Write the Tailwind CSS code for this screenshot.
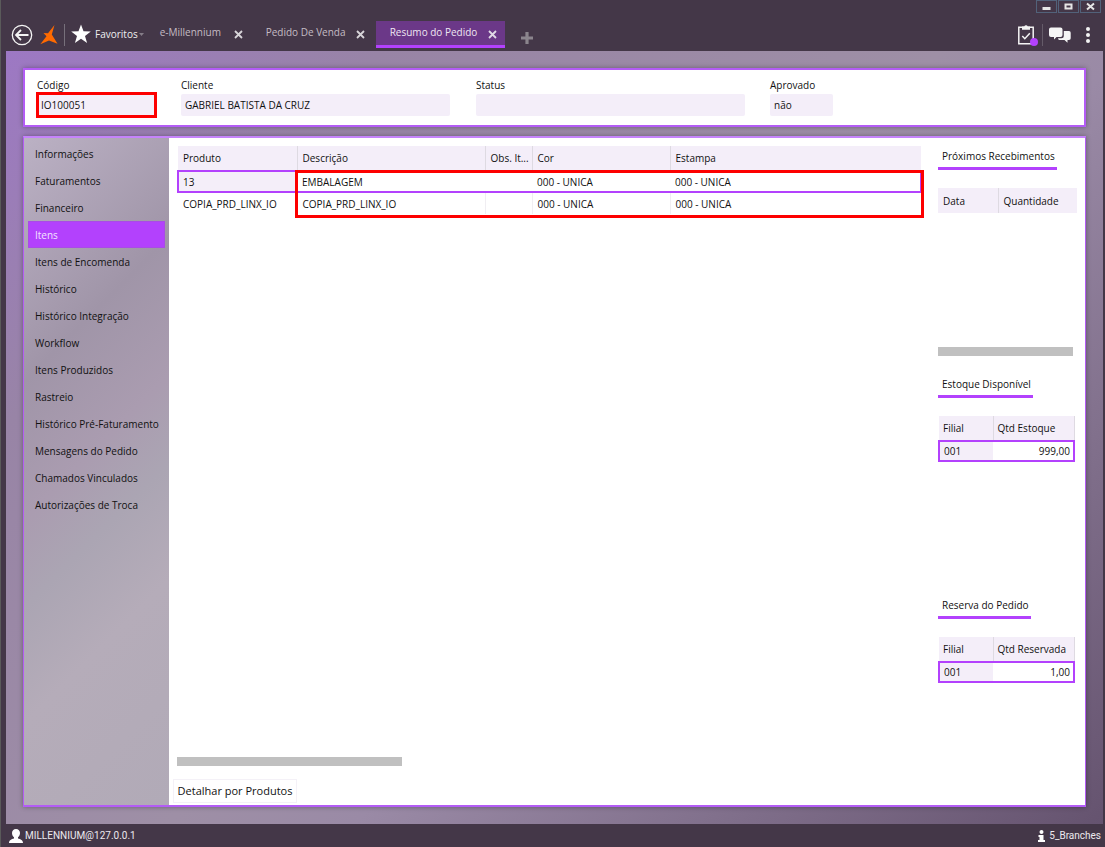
<!DOCTYPE html>
<html lang="pt-BR">
<head>
    <meta charset="UTF-8">
    <meta name="viewport" content="width=device-width, initial-scale=1.0">
    <title>Resumo do Pedido</title>
    <script src="https://cdn.jsdelivr.net/npm/@tailwindcss/browser@4"></script>
</head>
<body class="flex min-h-screen flex-col border-l border-[#5a5a5a] bg-[#443748] font-['Open_Sans','Noto_Sans',sans-serif] text-[10px] leading-4 text-[#111]">

    <!-- Window buttons -->
    <div class="flex h-[14px] justify-end gap-px pr-1">
        <button aria-label="Minimizar" class="flex h-[13px] w-[21px] items-center justify-center border border-[#52627a]">
            <svg class="h-[9px] w-[11px]" viewBox="0 0 11 9"><path d="M1.500 5h8v3h-8z" fill="#e6e6e6"/></svg>
        </button>
        <button aria-label="Maximizar" class="flex h-[13px] w-[21px] items-center justify-center border border-[#52627a]">
            <svg class="h-[9px] w-[11px]" viewBox="0 0 11 9"><path d="M2.500 2.500h6v4h-6z" fill="none" stroke="#e6e6e6" stroke-width="2"/></svg>
        </button>
        <button aria-label="Fechar" class="flex h-[13px] w-[21px] items-center justify-center border border-[#52627a]">
            <svg class="h-[9px] w-[11px]" viewBox="0 0 11 9"><path d="M2 1.500l7 6M9 1.500l-7 6" fill="none" stroke="#e6e6e6" stroke-width="2"/></svg>
        </button>
    </div>

    <!-- Toolbar with tabs -->
    <header class="flex h-[37px] items-center pr-[15px] pl-[10px] text-[#c4bcc4]">
        <button aria-label="Voltar" class="mt-1">
            <svg class="size-[22px]" viewBox="0 0 22 22" fill="none" stroke="#f4f4f4"><circle cx="11" cy="11" r="9.700" stroke-width="1.300"/><path d="M17.500 11H5.500M10 6l-5 5 5 5" stroke-width="1.800"/></svg>
        </button>
        <svg class="mt-1 ml-[7px] h-[20px] w-[18px]" viewBox="0 0 18 20" fill="#ff6a00"><path d="M14.500 0L11.800 9.500 17.500 18.700 9 15.500.3 19.300 6.500 11.300 3.500 8 8 8.300z"/></svg>
        <div class="mt-1 ml-[6px] h-[22px] w-px bg-[#77707b]"></div>
        <button class="mt-[3px] ml-[6px] flex items-center text-[#f0f0f0]">
            <svg class="mr-1 size-5" viewBox="0 0 20 20" fill="#fff"><path d="M10 .5l2.500 6.800 7.300.2-5.800 4.400 2.100 7.100L10 14.800 3.900 19 6 11.900.2 7.500l7.300-.2z"/></svg>
            Favoritos
            <svg class="ml-px h-[3px] w-[5px]" viewBox="0 0 5 3"><path d="M0 0h5L2.500 3z" fill="#857d88"/></svg>
        </button>
        <nav class="mt-[7px] ml-1 flex h-[27px] self-start">
            <div class="flex w-[106px] items-center justify-between pr-[11px] pb-[5px] pl-[12px]">
                <a href="#">e-Millennium</a>
                <button aria-label="Fechar e-Millennium" class="mt-1"><svg class="size-[9px]" viewBox="0 0 9 9"><path d="M1 1l7 7M8 1L1 8" stroke="#d8d5d9" stroke-width="1.800"/></svg></button>
            </div>
            <div class="flex w-[122px] items-center justify-between pr-[11px] pb-[5px] pl-[12px]">
                <a href="#">Pedido De Venda</a>
                <button aria-label="Fechar Pedido De Venda" class="mt-1"><svg class="size-[9px]" viewBox="0 0 9 9"><path d="M1 1l7 7M8 1L1 8" stroke="#d8d5d9" stroke-width="1.800"/></svg></button>
            </div>
            <div class="flex w-[129px] items-center justify-between border-b-[3px] border-[#b341fd] bg-[#6b3888] pr-2 pb-[2px] pl-[14px] text-[#eee6f2]">
                <a href="#">Resumo do Pedido</a>
                <button aria-label="Fechar Resumo do Pedido" class="mt-1"><svg class="size-[9px]" viewBox="0 0 9 9"><path d="M1 1l7 7M8 1L1 8" stroke="#e0d8e6" stroke-width="1.800"/></svg></button>
            </div>
        </nav>
        <button aria-label="Nova aba" class="mt-[10px] ml-4"><svg class="size-3" viewBox="0 0 12 12"><path d="M6 0v12M0 6h12" stroke="#8b858d" stroke-width="3.200"/></svg></button>
        <div class="mt-1 ml-auto flex items-center">
            <button aria-label="Tarefas" class="relative">
                <svg class="h-[21px] w-4" viewBox="0 0 16 21" fill="none" stroke="#f4f4f4"><path d="M.8 3.300h14.400v16.500H.8z" stroke-width="1.500"/><path d="M4 2.500h2.200a2 2 0 0 1 3.600 0H12v3.300H4z" fill="#f4f4f4" stroke="none"/><path d="M4.300 12l2.500 2.700 5-5.400" stroke-width="1.500"/></svg>
                <span class="absolute -right-1 -bottom-px size-2 rounded-full bg-[#b341fd]"></span>
            </button>
            <div class="ml-2 h-[22px] w-px bg-[#655b69]"></div>
            <button aria-label="Mensagens" class="ml-[6px]">
                <svg class="h-4 w-[22px]" viewBox="0 0 22 16" fill="#f6f6f6"><path d="M2 .5h9.500a2 2 0 0 1 2 2V8a2 2 0 0 1-2 2H7.500L5 12.500V10H2a2 2 0 0 1-2-2V2.500a2 2 0 0 1 2-2z"/><path d="M14.800 4H20a1.700 1.700 0 0 1 1.700 1.700v5.600A1.700 1.700 0 0 1 20 13h-1.500v2.700L15.500 13H10.500A1.700 1.700 0 0 1 9 11.300h3.300a2.500 2.500 0 0 0 2.500-2.500z"/></svg>
            </button>
            <button aria-label="Menu" class="ml-[15px]">
                <svg class="h-4 w-1" viewBox="0 0 4 16" fill="#f4f4f4"><circle cx="2" cy="2" r="2"/><circle cx="2" cy="8" r="2"/><circle cx="2" cy="14" r="2"/></svg>
            </button>
        </div>
    </header>

    <!-- Workspace -->
    <main class="mr-[2px] ml-[5px] flex grow flex-col gap-[9px] bg-[linear-gradient(135deg,#9d78c4_0%,#9884a6_20%,#9e8fa6_50%,#9a8aa6_60%,#65536f_100%)] p-[17px]">

        <form class="flex h-[59px] shrink-0 border-2 border-[#b35cf5] bg-white pt-[7px] pl-[11px] shadow-[0_0_5px_#0005]">
            <div class="mr-[24px] flex w-[121px] flex-col">
                <label for="codigo" class="pl-px">Código</label>
                <input id="codigo" type="text" value="IO100051" readonly class="-mt-px h-[26px] w-full border-[3px] border-[#fd0000] bg-[#f4eef9] pl-[2px] outline-none">
            </div>
            <div class="mr-[26px] flex w-[269px] flex-col gap-px">
                <label for="cliente">Cliente</label>
                <input id="cliente" type="text" value="GABRIEL BATISTA DA CRUZ" readonly class="h-[22px] w-full rounded-[2px] bg-[#f4eef9] pl-1 outline-none">
            </div>
            <div class="mr-[25px] flex w-[269px] flex-col gap-px">
                <label for="status">Status</label>
                <input id="status" type="text" readonly class="h-[22px] w-full rounded-[2px] bg-[#f4eef9] pl-1 outline-none">
            </div>
            <div class="flex w-[63px] flex-col gap-px">
                <label for="aprovado">Aprovado</label>
                <input id="aprovado" type="text" value="não" readonly class="h-[22px] w-full rounded-[2px] bg-[#f4eef9] pl-1 outline-none">
            </div>
        </form>

        <section class="flex grow border border-t-2 border-b-2 border-[#b35cf5] border-t-[#c583fb] bg-white shadow-[0_0_5px_#0005]">
            <nav class="w-[145px] shrink-0 bg-[linear-gradient(135deg,#bbb1c4_0%,#a095a8_30%,#aa9cb0_47%,#aba5b3_58%,#b5acb9_72%,#b1aab7_100%)] px-1 pt-[2px]">
                <a href="#" class="flex h-[27px] items-center pl-[7px]">Informações</a>
                <a href="#" class="flex h-[27px] items-center pl-[7px]">Faturamentos</a>
                <a href="#" class="flex h-[27px] items-center pl-[7px]">Financeiro</a>
                <a href="#" class="flex h-[27px] items-center border border-[#a94be6] bg-[#b341fd] pl-[6px] text-[#f3e3ff]">Itens</a>
                <a href="#" class="flex h-[27px] items-center pl-[7px]">Itens de Encomenda</a>
                <a href="#" class="flex h-[27px] items-center pl-[7px]">Histórico</a>
                <a href="#" class="flex h-[27px] items-center pl-[7px]">Histórico Integração</a>
                <a href="#" class="flex h-[27px] items-center pl-[7px]">Workflow</a>
                <a href="#" class="flex h-[27px] items-center pl-[7px]">Itens Produzidos</a>
                <a href="#" class="flex h-[27px] items-center pl-[7px]">Rastreio</a>
                <a href="#" class="flex h-[27px] items-center pl-[7px] whitespace-nowrap">Histórico Pré-Faturamento</a>
                <a href="#" class="flex h-[27px] items-center pl-[7px]">Mensagens do Pedido</a>
                <a href="#" class="flex h-[27px] items-center pl-[7px]">Chamados Vinculados</a>
                <a href="#" class="flex h-[27px] items-center pl-[7px]">Autorizações de Troca</a>
            </nav>

            <div class="flex min-w-0 grow flex-col pt-2 pl-2">
                <div class="relative">
                    <table class="w-full table-fixed border-collapse text-left">
                        <thead>
                            <tr class="h-[25px] bg-[#f4eef9]">
                                <th class="w-[119px] border-r border-[#dedae2] pl-[5px] font-normal">Produto</th>
                                <th class="w-[188px] border-r border-[#dedae2] pl-[5px] font-normal">Descrição</th>
                                <th class="w-[47px] border-r border-[#dedae2] pl-[5px] font-normal whitespace-nowrap">Obs. It...</th>
                                <th class="w-[138px] border-r border-[#dedae2] pl-[5px] font-normal">Cor</th>
                                <th class="pl-[5px] font-normal">Estampa</th>
                            </tr>
                        </thead>
                        <tbody>
                            <tr class="h-[21px] border-2 border-[#b341fd]">
                                <td class="bg-[#f4eef9] pl-1">13</td>
                                <td class="pl-[5px]">EMBALAGEM</td>
                                <td></td>
                                <td class="pl-[5px]">000 - UNICA</td>
                                <td class="pl-[5px]">000 - UNICA</td>
                            </tr>
                            <tr class="h-[22px]">
                                <td class="border-r border-[#f0eef2] pl-[5px]">COPIA_PRD_LINX_IO</td>
                                <td class="border-r border-[#f0eef2] pl-[5px]">COPIA_PRD_LINX_IO</td>
                                <td class="border-r border-[#f0eef2]"></td>
                                <td class="border-r border-[#f0eef2] pl-[5px]">000 - UNICA</td>
                                <td class="pl-[5px]">000 - UNICA</td>
                            </tr>
                        </tbody>
                    </table>
                    <div class="pointer-events-none absolute top-6 -right-[2px] left-[118px] h-12 border-[3px] border-[#fd0000]"></div>
                </div>
                <div class="mt-auto h-[9px] w-[225px] bg-[#c0c0c0]"></div>
                <button class="mt-[13px] mb-[2px] -ml-1 h-6 w-[124px] border border-[#f4f1f7] text-[11px] whitespace-nowrap">Detalhar por Produtos</button>
            </div>

            <aside class="mr-2 ml-4 flex w-[139px] shrink-0 flex-col pt-[10px]">
                <div class="h-[221px]">
                    <h2 class="inline-block h-[22px] w-[119px] border-b-[3px] border-[#b341fd] pl-1 whitespace-nowrap">Próximos Recebimentos</h2>
                    <table class="mt-[18px] w-full table-fixed border-collapse text-left">
                        <thead>
                            <tr class="h-[25px] bg-[#f4eef9]">
                                <th class="w-[60px] border-r border-[#dedae2] pl-[5px] font-normal">Data</th>
                                <th class="pl-[5px] font-normal">Quantidade</th>
                            </tr>
                        </thead>
                    </table>
                </div>
                <div class="-mt-[22px] mb-[20px] h-[9px] w-[135px] bg-[#c0c0c0]"></div>
                <div class="h-[221px]">
                    <h2 class="inline-block h-[22px] w-[95px] border-b-[3px] border-[#b341fd] pl-1 whitespace-nowrap">Estoque Disponível</h2>
                    <table class="mt-[18px] w-[137px] table-fixed border-collapse text-left">
                        <thead>
                            <tr class="h-[25px] bg-[#f4eef9]">
                                <th class="w-[54px] border-r border-[#dedae2] pl-1 font-normal">Filial</th>
                                <th class="border-r border-[#dedae2] pl-1 font-normal">Qtd Estoque</th>
                            </tr>
                        </thead>
                        <tbody>
                            <tr class="h-5 border-2 border-[#b341fd]">
                                <td class="bg-[#f4eef9] pl-1">001</td>
                                <td class="pr-[3px] text-right">999,00</td>
                            </tr>
                        </tbody>
                    </table>
                </div>
                <div>
                    <h2 class="inline-block h-[22px] w-[93px] border-b-[3px] border-[#b341fd] pl-1 whitespace-nowrap">Reserva do Pedido</h2>
                    <table class="mt-[18px] w-[137px] table-fixed border-collapse text-left">
                        <thead>
                            <tr class="h-[25px] bg-[#f4eef9]">
                                <th class="w-[54px] border-r border-[#dedae2] pl-1 font-normal">Filial</th>
                                <th class="border-r border-[#dedae2] pl-1 font-normal">Qtd Reservada</th>
                            </tr>
                        </thead>
                        <tbody>
                            <tr class="h-5 border-2 border-[#b341fd]">
                                <td class="bg-[#f4eef9] pl-1">001</td>
                                <td class="pr-[3px] text-right">1,00</td>
                            </tr>
                        </tbody>
                    </table>
                </div>
            </aside>
        </section>
    </main>

    <!-- Status bar -->
    <footer class="flex h-[23px] items-center justify-between pr-1 pl-2 font-['Roboto',sans-serif] text-[#ece9ee]">
        <div class="flex items-center gap-[2px]">
            <svg class="size-[14px]" viewBox="0 0 14 14" fill="#fff"><path d="M7 0c2.500 0 4 1.700 4 4 0 1.800-.8 3.300-2 4.200v1.300c2.600.8 5 1.500 5 4.500H0c0-3 2.400-3.700 5-4.500V8.200C3.800 7.300 3 5.800 3 4c0-2.300 1.500-4 4-4z"/></svg>
            <span>MILLENNIUM@127.0.0.1</span>
        </div>
        <div class="flex items-center gap-1">
            <svg class="h-3 w-[7px]" viewBox="0 0 7 12" fill="#fff"><circle cx="3.500" cy="2" r="2"/><path d="M.5 5H5.500v5H7v2H0v-2h1.500V7H.5z"/></svg>
            <span>5_Branches</span>
        </div>
    </footer>
</body>
</html>
